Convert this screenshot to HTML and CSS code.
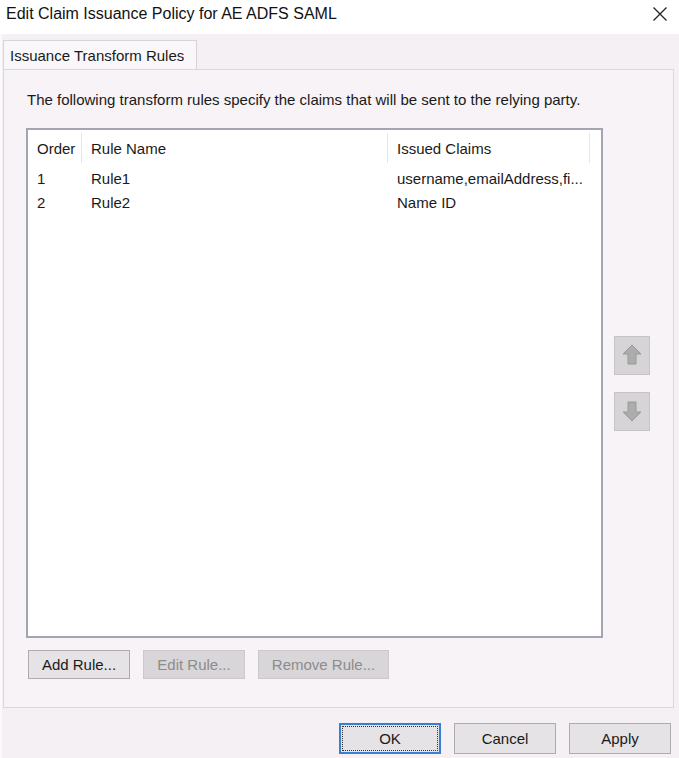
FILE: index.html
```html
<!DOCTYPE html>
<html>
<head>
<meta charset="utf-8">
<link rel="stylesheet" href="styles.css">
</head>
<body>
<div class="dialog">
  <div class="titlebar">
    <span class="title">Edit Claim Issuance Policy for AE ADFS SAML</span>
    <svg class="close" width="16" height="16" viewBox="0 0 16 16"><path d="M1.5 1.5 L14.5 14.5 M14.5 1.5 L1.5 14.5" stroke="#222" stroke-width="1.3" fill="none"/></svg>
  </div>
  <div class="tabs">
    <div class="tab">Issuance Transform Rules</div>
  </div>
  <div class="panel">
    <p class="desc">The following transform rules specify the claims that will be sent to the relying party.</p>
    <div class="listrow">
      <div class="listbox">
        <div class="grid head">
          <div class="cell sep">Order</div>
          <div class="cell sep">Rule Name</div>
          <div class="cell sep">Issued Claims</div>
        </div>
        <div class="grid row">
          <div class="cell">1</div>
          <div class="cell">Rule1</div>
          <div class="cell">username,emailAddress,fi...</div>
        </div>
        <div class="grid row">
          <div class="cell">2</div>
          <div class="cell">Rule2</div>
          <div class="cell">Name ID</div>
        </div>
      </div>
      <div class="arrows">
        <div class="arrowbtn">
          <svg width="24" height="26" viewBox="0 0 24 26"><path d="M12 3 L21 12 L16 12 L16 22 L8 22 L8 12 L3 12 Z" fill="#acacac" stroke="#9a9a9a" stroke-width="1" stroke-linejoin="round"/></svg>
        </div>
        <div class="arrowbtn">
          <svg width="24" height="26" viewBox="0 0 24 26"><path d="M12 23 L21 14 L16 14 L16 4 L8 4 L8 14 L3 14 Z" fill="#acacac" stroke="#9a9a9a" stroke-width="1" stroke-linejoin="round"/></svg>
        </div>
      </div>
    </div>
    <div class="actions">
      <button class="btn">Add Rule...</button>
      <button class="btn disabled">Edit Rule...</button>
      <button class="btn disabled wide">Remove Rule...</button>
    </div>
  </div>
  <div class="footer">
    <button class="btn big default"><span class="focus">OK</span></button>
    <button class="btn big">Cancel</button>
    <button class="btn big">Apply</button>
  </div>
</div>
</body>
</html>
```

FILE: styles.css
```css
html, body {
  margin: 0;
  padding: 0;
  background: #f4f0f4;
}
body {
  font-family: "Liberation Sans", Arial, sans-serif;
  font-size: 15px;
  color: #1a1a1a;
  width: 679px;
  height: 758px;
  overflow: hidden;
}
.dialog {
  display: flex;
  flex-direction: column;
  height: 758px;
  border-left: 2px solid #fbfafb;
}
.titlebar {
  height: 34px;
  background: #ffffff;
  display: flex;
  align-items: center;
  justify-content: space-between;
  padding: 0 11px 0 4px;
  margin-left: -2px;
}
.title {
  font-size: 16px;
  color: #111;
  padding-left: 2px;
  margin-top: -6px;
}
.close {
  margin-top: -6px;
}
.tabs {
  display: flex;
  padding-left: 1px;
  margin-top: 6px;
  height: 29px;
}
.tab {
  border: 1px solid #d6d4d6;
  border-bottom: none;
  background: #f9f7f9;
  padding: 0 6px 0 6px;
  display: flex;
  align-items: center;
  font-size: 15px;
  width: 180px;
}
.panel {
  margin: 0 5px 0 1px;
  height: 639px;
  box-sizing: border-box;
  border: 1px solid #dad8da;
  background: #f7f3f7;
  padding: 21px 0 0 22px;
  display: flex;
  flex-direction: column;
}
.desc {
  margin: 0;
  line-height: 18px;
  height: 18px;
  font-size: 15px;
  padding-left: 1px;
}
.listrow {
  display: flex;
  margin-top: 19px;
  gap: 11px;
  align-items: center;
}
.listbox {
  width: 577px;
  height: 510px;
  box-sizing: border-box;
  border: 2px solid #a4a4b2;
  background: #ffffff;
}
.grid {
  display: grid;
  grid-template-columns: 54px 306px 202px;
}
.head {
  height: 36px;
  align-items: center;
}
.row {
  height: 24px;
  align-items: center;
}
.cell {
  padding-left: 9px;
  white-space: nowrap;
  overflow: hidden;
}
.head .cell {
  height: 30px;
  display: flex;
  align-items: center;
}
.sep {
  border-right: 1px solid #e6e6ea;
}
.arrows {
  display: flex;
  flex-direction: column;
  gap: 17px;
}
.arrowbtn {
  width: 36px;
  height: 39px;
  box-sizing: border-box;
  background: #d6d4d6;
  border: 1px solid #c6c4c6;
  display: flex;
  align-items: center;
  justify-content: center;
}
.actions {
  display: flex;
  gap: 13px;
  margin-top: 12px;
  padding-left: 2px;
}
.btn {
  font-family: "Liberation Sans", Arial, sans-serif;
  font-size: 15px;
  color: #1a1a1a;
  width: 102px;
  height: 29px;
  box-sizing: border-box;
  background: #e5e3e5;
  border: 1px solid #adabad;
  padding: 0;
  display: flex;
  align-items: center;
  justify-content: center;
}
.btn.disabled {
  background: #d8d6d8;
  border-color: #cbc9cb;
  color: #8c8c8c;
}
.btn.wide {
  width: 131px;
}
.footer {
  display: flex;
  justify-content: flex-end;
  gap: 13px;
  padding: 15px 8px 0 0;
}
.btn.big {
  height: 31px;
  width: 102px;
  font-size: 15px;
}
.btn.default {
  border: 2px solid #3a7fd0;
  padding: 1px;
}
.focus {
  display: flex;
  align-items: center;
  justify-content: center;
  width: 100%;
  height: 100%;
  box-sizing: border-box;
  border: 1px dotted #333;
}
```
